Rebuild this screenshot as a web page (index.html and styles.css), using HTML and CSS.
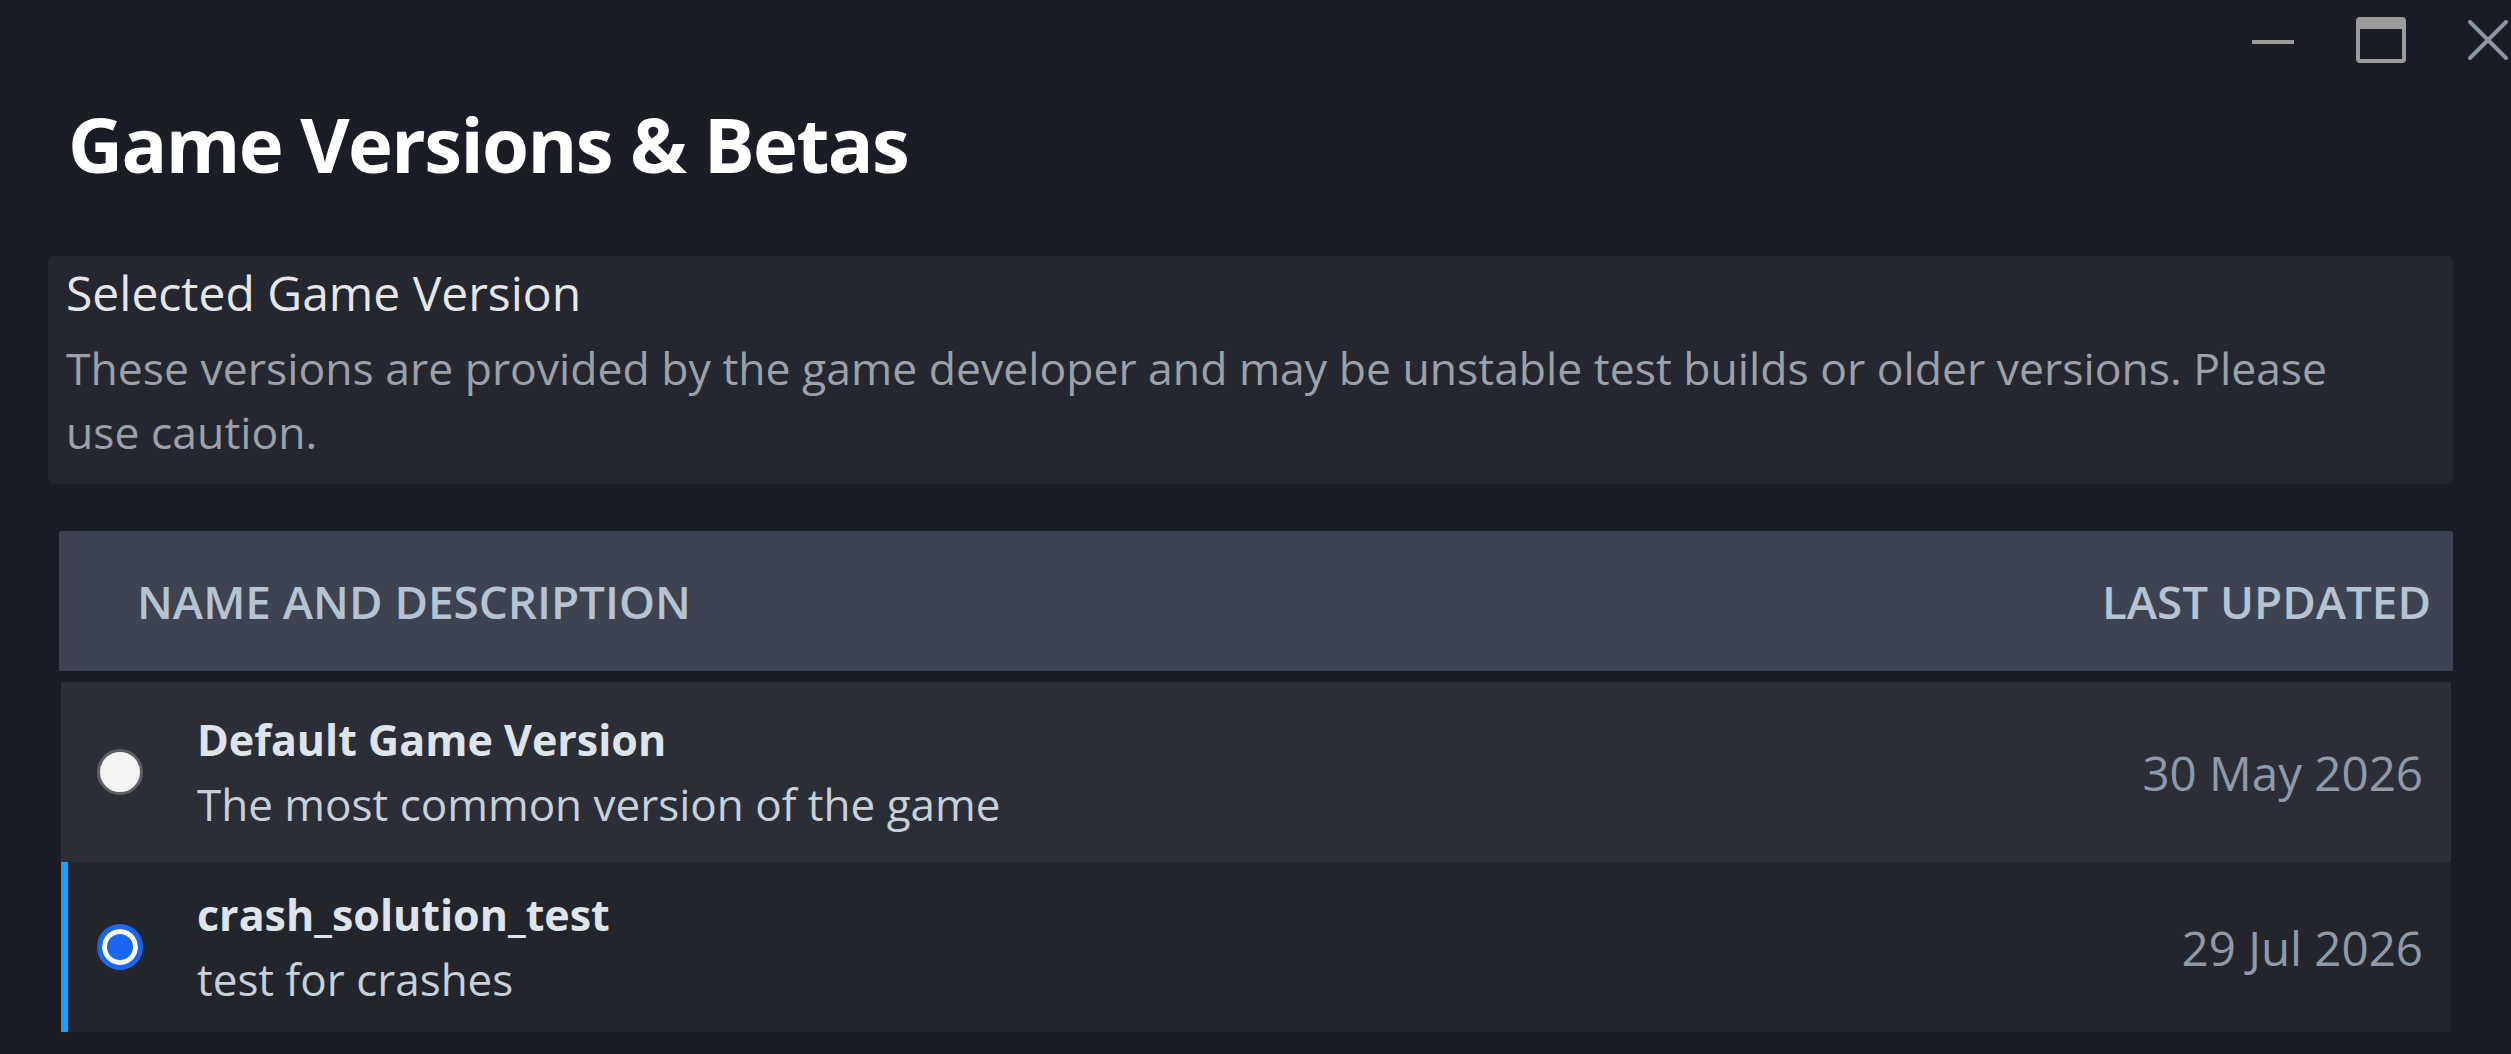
FILE: index.html
```html
<!DOCTYPE html>
<html lang="en">
<head>
<meta charset="utf-8">
<title>Game Versions &amp; Betas</title>
<link rel="stylesheet" href="styles.css">
</head>
<body>
<div class="window">
  <div class="titlebar">
    <svg class="ctl ctl-min" width="44" height="10" viewBox="0 0 44 10"><line x1="1" y1="7" x2="43" y2="7" stroke="#9a9a9a" stroke-width="4"/></svg>
    <svg class="ctl ctl-max" width="50" height="46" viewBox="0 0 50 46"><rect x="2" y="2" width="46" height="42" rx="2" fill="none" stroke="#9b9b9b" stroke-width="4"/><rect x="2" y="2" width="46" height="10" fill="#9b9b9b"/></svg>
    <svg class="ctl ctl-close" width="40" height="40" viewBox="0 0 40 40"><path d="M2 2 L38 38 M38 2 L2 38" stroke="#8c96a0" stroke-width="4" stroke-linecap="round"/></svg>
  </div>
  <main class="content">
    <h1 class="title">Game Versions &amp; Betas</h1>
    <section class="info">
      <div class="info-head">Selected Game Version</div>
      <p class="info-desc">These versions are provided by the game developer and may be unstable test builds or older versions. Please<br>use caution.</p>
    </section>
    <div class="table">
      <div class="thead">
        <span class="th">NAME AND DESCRIPTION</span>
        <span class="th">LAST UPDATED</span>
      </div>
      <div class="rows">
        <div class="row row-default">
          <span class="radio"></span>
          <div class="cell">
            <div class="name">Default Game Version</div>
            <div class="desc">The most common version of the game</div>
          </div>
          <div class="date">30 May 2026</div>
        </div>
        <div class="row row-selected">
          <span class="radio checked"></span>
          <div class="cell">
            <div class="name">crash_solution_test</div>
            <div class="desc">test for crashes</div>
          </div>
          <div class="date">29 Jul 2026</div>
        </div>
      </div>
    </div>
  </main>
</div>
</body>
</html>
```
FILE: styles.css
```css
* { box-sizing: border-box; }
html, body { margin: 0; height: 100%; }
body {
  background: #1a1d25;
  font-family: "Open Sans", "Noto Sans", sans-serif;
  color: #fff;
  overflow: hidden;
}
.window {
  width: 2511px;
  height: 1054px;
  display: flex;
  flex-direction: column;
}
.titlebar {
  height: 80px;
  flex: none;
  display: flex;
  justify-content: flex-end;
  align-items: center;
  padding-right: 3px;
}
.ctl { display: block; }
.ctl-min { margin-right: 61px; }
.ctl-max { margin-right: 62px; }
.content {
  padding: 0 58px 0 48px;
}
.title {
  margin: 19px 0 0 20px;
  font-size: 76px;
  line-height: 90px;
  font-weight: 700;
  letter-spacing: -1.6px;
  color: #ffffff;
}
.info {
  margin-top: 67px;
  background: #24272f;
  border-radius: 6px;
  padding: 5px 20px 20px 18px;
}
.info-head {
  font-size: 48px;
  line-height: 64px;
  color: #e6e6e6;
}
.info-desc {
  margin: 11px 0 0;
  font-size: 44.5px;
  line-height: 64px;
  color: #9ca0a7;
}
.table {
  margin: 47px 0 0 11px;
}
.thead {
  height: 140px;
  background: #3d4350;
  border-radius: 3px 3px 0 0;
  display: flex;
  align-items: center;
  justify-content: space-between;
  padding: 0 22px 0 78px;
}
.th {
  font-size: 45.8px;
  font-weight: 600;
  color: #b6c3d0;
}
.rows {
  margin: 11px 2px 0 2px;
}
.row {
  display: flex;
  align-items: center;
  padding: 0 28px 0 36px;
}
.row-default { height: 180px; background: #2b2e37; }
.row-selected { height: 170px; background: #22252c; box-shadow: inset 7px 0 0 #1a9fff; }
.radio {
  flex: none;
  width: 46px;
  height: 46px;
  border-radius: 50%;
  background: #f4f4f4;
  border: 3px solid #5d5f63;
  margin-right: 54px;
}
.radio.checked {
  background: #1a66ee;
  border: 5px solid #1a66ee;
  box-shadow: inset 0 0 0 5px #ffffff;
}
.cell { flex: 1; }
.name {
  font-size: 43px;
  line-height: 65px;
  font-weight: 700;
  color: #dfe4ea;
}
.desc {
  font-size: 44px;
  line-height: 65px;
  color: #c8d0d8;
}
.date {
  font-size: 47.5px;
  color: #8f9aa6;
}
```
